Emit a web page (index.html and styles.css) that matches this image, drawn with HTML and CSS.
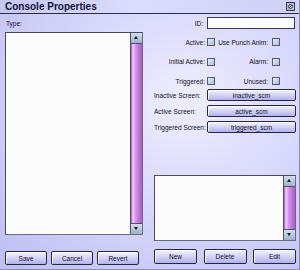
FILE: index.html
```html
<!DOCTYPE html>
<html lang="en">
<head>
  <meta charset="UTF-8">
  <title>Console Properties</title>
  <link rel="stylesheet" href="styles.css">
</head>
<body>
  <div class="window">
    <!-- Title bar -->
    <div class="titlebar">
      <h1>Console Properties</h1>
      <span class="close">
        <svg width="9" height="9" viewBox="0 0 9 9">
          <rect x="0.5" y="0.5" width="8" height="8" fill="#9fb0c8" stroke="#3c3c58"/>
          <rect x="1.5" y="1.5" width="6" height="6" fill="#c4d2e2"/>
          <circle cx="4.5" cy="4.5" r="2" fill="none" stroke="#3c4660" stroke-width="1"/>
          <line x1="2.8" y1="6.2" x2="6.2" y2="2.8" stroke="#3c4660" stroke-width="1"/>
        </svg>
      </span>
    </div>

    <div class="content">
      <!-- Left column: type list -->
      <div class="left">
        <div class="type-label">Type:</div>
        <div class="listbox tall">
          <div class="list-area"></div>
          <div class="scrollbar">
            <span class="arrow up"></span>
            <span class="track"></span>
            <span class="arrow down"></span>
          </div>
        </div>
        <div class="buttons">
          <button>Save</button>
          <button>Cancel</button>
          <button>Revert</button>
        </div>
      </div>

      <!-- Right column: properties -->
      <div class="right">
        <div class="id-row">
          <label>ID:</label>
          <input type="text">
        </div>

        <div class="check-row first">
          <label>Active:</label><span class="box"></span>
          <label>Use Punch Anim:</label><span class="box"></span>
        </div>
        <div class="check-row">
          <label>Initial Active:</label><span class="box"></span>
          <label>Alarm:</label><span class="box"></span>
        </div>
        <div class="check-row">
          <label>Triggered:</label><span class="box"></span>
          <label>Unused:</label><span class="box"></span>
        </div>

        <div class="screen-row first">
          <label>Inactive Screen:</label><button>inactive_scm</button>
        </div>
        <div class="screen-row">
          <label>Active Screen:</label><button>active_scm</button>
        </div>
        <div class="screen-row">
          <label>Triggered Screen:</label><button>triggered_scm</button>
        </div>

        <div class="listbox short">
          <div class="list-area"></div>
          <div class="scrollbar">
            <span class="arrow up"></span>
            <span class="track"></span>
            <span class="arrow down"></span>
          </div>
        </div>

        <div class="buttons spread">
          <button>New</button>
          <button>Delete</button>
          <button>Edit</button>
        </div>
      </div>
    </div>
  </div>
</body>
</html>
```

FILE: styles.css
```css
body {
  margin: 0;
  font-family: 'Liberation Sans', Arial, sans-serif;
  color: #10102a;
}

.window {
  width: 300px;
  height: 270px;
  box-sizing: border-box;
  border-right: 1px solid #8c8cbc;
  border-bottom: 1px solid #8c8cbc;
  background: radial-gradient(ellipse at 62% 38%, #eeeeff 0%, #d8d8fb 45%, #bebef2 100%);
  overflow: hidden;
}

/* Title bar */
.titlebar {
  height: 14px;
  box-sizing: border-box;
  border-bottom: 1px solid #2c2c50;
  background: linear-gradient(to right, #c6c6f2, #dcdcfc 45%, #d0d0f8);
  display: flex;
  align-items: center;
  justify-content: space-between;
  padding: 0 4px 0 5px;
}

.titlebar h1 {
  margin: 0;
  font-size: 10px;
  font-weight: bold;
  color: #12123a;
  line-height: 13px;
}

.close {
  display: flex;
}

/* Main columns */
.content {
  display: flex;
  gap: 11px;
  padding-left: 5px;
}

.left {
  width: 138px;
  display: flex;
  flex-direction: column;
}

.right {
  width: 142px;
  display: flex;
  flex-direction: column;
}

.type-label {
  font-size: 6.5px;
  height: 9px;
  line-height: 9px;
  margin: 5px 0 0 1px;
}

/* List boxes */
.listbox {
  display: flex;
  box-sizing: border-box;
  border: 1px solid #4a4a5c;
  border-right-color: #6a6a80;
  border-bottom-color: #6a6a80;
  background: #fcfcfc;
}

.listbox.tall {
  height: 203px;
  margin-top: 4px;
}

.listbox.short {
  height: 66px;
  margin-top: 42px;
}

.list-area {
  flex: 1;
}

.scrollbar {
  width: 11px;
  display: flex;
  flex-direction: column;
  border-left: 1px solid #505068;
}

.arrow {
  height: 10px;
  background: linear-gradient(#d4e0ee, #9cb2cc);
  border-bottom: 1px solid #505068;
  position: relative;
}

.arrow.down {
  border-bottom: none;
  border-top: 1px solid #505068;
}

.arrow::after {
  content: "";
  position: absolute;
  left: 3px;
  top: 3px;
  border-left: 2.5px solid transparent;
  border-right: 2.5px solid transparent;
}

.arrow.up::after {
  border-bottom: 3px solid #101018;
}

.arrow.down::after {
  border-top: 3px solid #101018;
}

.track {
  flex: 1;
  background: linear-gradient(to right, #9a58b8 0%, #f2d4fa 18%, #dc98ee 38%, #c674e0 70%, #a85ac8 100%);
}

/* Buttons */
button {
  font-family: 'Liberation Sans', Arial, sans-serif;
  font-size: 6.5px;
  color: #10102a;
  height: 14px;
  padding: 0;
  box-sizing: border-box;
  border: 1px solid #262644;
  border-radius: 2px;
  background: linear-gradient(#f4f4ff, #d0d0f8 55%, #b2b2ea);
  box-shadow: inset 1px 1px 0 #ffffff;
}

.buttons {
  display: flex;
  gap: 4px;
  margin-top: 16px;
}

.buttons button {
  width: 42px;
}

.buttons.spread {
  margin-top: 8px;
  justify-content: space-between;
}

.buttons.spread button {
  width: 43px;
  height: 15px;
}

/* Property rows */
.id-row {
  display: flex;
  align-items: center;
  margin-top: 3px;
  height: 12px;
}

.id-row label {
  width: 49px;
  text-align: right;
  padding-right: 4px;
  font-size: 6.5px;
}

.id-row input {
  width: 88px;
  height: 12px;
  box-sizing: border-box;
  border: 1px solid #3a3a50;
  background: #fcfcfc;
  padding: 0;
}

.check-row {
  display: grid;
  grid-template-columns: 53px 8px 57px 8px;
  align-items: center;
  height: 10px;
  margin-top: 9.5px;
  font-size: 6.5px;
}

.check-row.first {
  margin-top: 8px;
}

.check-row label {
  text-align: right;
  padding-right: 2px;
  white-space: nowrap;
}

.check-row label:nth-of-type(2) {
  padding-right: 4px;
}

.box {
  width: 8px;
  height: 8px;
  box-sizing: border-box;
  border: 1px solid #5a5a78;
  background: linear-gradient(135deg, #e6f0fa, #a8bcd4);
}

.screen-row {
  display: flex;
  align-items: center;
  height: 12px;
  margin-top: 4px;
  font-size: 6.5px;
}

.screen-row.first {
  margin-top: 3px;
}

.screen-row label {
  width: 53px;
  white-space: nowrap;
}

.screen-row button {
  width: 89px;
  height: 12px;
}
```
